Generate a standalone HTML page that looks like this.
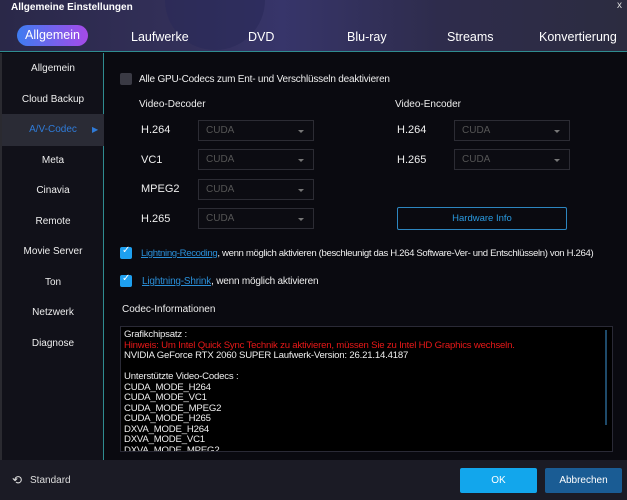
<!DOCTYPE html>
<html><head><meta charset="utf-8"><style>
*{margin:0;padding:0;box-sizing:border-box}
body{width:627px;height:500px;overflow:hidden;background:#0a0a10;font-family:"Liberation Sans",sans-serif;color:#e6e6ea;position:relative;font-size:11px}
.hdr{position:absolute;left:0;top:0;width:627px;height:52px;background:linear-gradient(90deg,#2a2848 0%,#33305a 30%,#37356a 45%,#2e2c4c 70%,#2c2c40 100%);border-bottom:1px solid #2f8c90}
.blob{position:absolute;left:165px;top:0;width:100px;height:50px;border-radius:0 0 50px 50px;background:#2a2a58;opacity:.6}
.title{position:absolute;left:11px;top:2px;font-size:10px;font-weight:bold;color:#fff}
.x{position:absolute;right:5px;top:0;font-size:10px;color:#ddd}
.tab{position:absolute;top:30px;font-size:12.5px;color:#fff}
.pill{position:absolute;left:17px;top:25px;width:71px;height:21px;border-radius:11px;background:linear-gradient(90deg,#3e7cf0,#a64ae8);font-size:12.5px;text-align:center;line-height:21px;color:#fff}
.side{position:absolute;left:2px;top:53px;width:102px;height:407px;background:#111119;border-right:1px solid #2f8c90}
.side div{position:absolute;left:0;width:102px;text-align:center;font-size:10px;color:#eee}
.sel{background:#2a2b35;height:32px;line-height:32px;color:#2f7bd8!important}
.cb{position:absolute;width:12px;height:12px;border-radius:2px}
.lbl{position:absolute;font-size:10px;color:#eee;white-space:nowrap}
.s{position:absolute;width:116px;height:21px;border:1px solid #2c2c34;background:#0c0c12;color:#555;font-size:10px;padding:4px 0 0 7px}
.s:after{content:"";position:absolute;right:9px;top:9px;border:3px solid transparent;border-top-color:#777}
.cd{position:absolute;font-size:11px;color:#eee}
a{color:#2a8fd8;text-decoration:underline}
.info{position:absolute;left:120px;top:326px;width:493px;height:126px;background:#000;border:1px solid #2a2a36;font-size:9.6px;line-height:10.5px;padding:3px 0 0 3px;overflow:hidden;color:#eee;letter-spacing:-0.2px}
.foot{position:absolute;left:0;top:460px;width:627px;height:40px;background:#1b1b25}
.btn{position:absolute;top:468px;height:25px;border-radius:2px;font-size:10px;text-align:center;line-height:25px;color:#fff}
</style></head><body>
<div class="hdr"><div class="blob"></div>
<div class="title">Allgemeine Einstellungen</div><div class="x">x</div>
<div class="pill">Allgemein</div>
<div class="tab" style="left:131px">Laufwerke</div>
<div class="tab" style="left:248px">DVD</div>
<div class="tab" style="left:347px">Blu-ray</div>
<div class="tab" style="left:447px">Streams</div>
<div class="tab" style="left:539px">Konvertierung</div>
</div>
<div class="side">
<div style="top:10px">Allgemein</div>
<div style="top:41px">Cloud Backup</div>
<div class="sel" style="top:61px">A/V-Codec <span style="position:absolute;left:90px;top:0;font-size:8px;color:#2f7bd8">▶</span></div>
<div style="top:102px">Meta</div>
<div style="top:132px">Cinavia</div>
<div style="top:163px">Remote</div>
<div style="top:193px">Movie Server</div>
<div style="top:224px">Ton</div>
<div style="top:254px">Netzwerk</div>
<div style="top:285px">Diagnose</div>
</div>
<div style="position:absolute;left:0;top:53px;width:2px;height:407px;background:#2a2a30"></div>

<div class="cb" style="left:120px;top:73px;background:#3a3a44"></div>
<div class="lbl" style="left:139px;top:74px;letter-spacing:-0.2px">Alle GPU-Codecs zum Ent- und Verschlüsseln deaktivieren</div>
<div class="lbl" style="left:139px;top:99px">Video-Decoder</div>
<div class="lbl" style="left:395px;top:99px">Video-Encoder</div>

<div class="cd" style="left:141px;top:124px">H.264</div><div class="s" style="left:198px;top:120px">CUDA</div>
<div class="cd" style="left:141px;top:154px">VC1</div><div class="s" style="left:198px;top:149px">CUDA</div>
<div class="cd" style="left:141px;top:183px">MPEG2</div><div class="s" style="left:198px;top:179px">CUDA</div>
<div class="cd" style="left:141px;top:213px">H.265</div><div class="s" style="left:198px;top:208px">CUDA</div>
<div class="cd" style="left:397px;top:124px">H.264</div><div class="s" style="left:454px;top:120px">CUDA</div>
<div class="cd" style="left:397px;top:154px">H.265</div><div class="s" style="left:454px;top:149px">CUDA</div>
<div style="position:absolute;left:397px;top:207px;width:170px;height:23px;border:1px solid #2d86c0;border-radius:2px;color:#2a9ae0;font-size:9.5px;text-align:center;line-height:21px">Hardware Info</div>

<div class="cb" style="left:120px;top:247px;background:#1ea0f0"><span style="position:absolute;left:2px;top:-2px;font-size:10px;color:#fff">✓</span></div>
<div class="lbl" style="left:141px;top:248px;font-size:9.6px;letter-spacing:-0.35px"><a>Lightning-Recoding</a>, wenn möglich aktivieren (beschleunigt das H.264 Software-Ver- und Entschlüsseln) von H.264)</div>
<div class="cb" style="left:120px;top:275px;background:#1ea0f0"><span style="position:absolute;left:2px;top:-2px;font-size:10px;color:#fff">✓</span></div>
<div class="lbl" style="left:142px;top:276px;letter-spacing:-0.2px"><a>Lightning-Shrink</a>, wenn möglich aktivieren</div>
<div class="lbl" style="left:122px;top:304px">Codec-Informationen</div>

<div class="info">Grafikchipsatz :<br><span style="color:#e81818">Hinweis: Um Intel Quick Sync Technik zu aktivieren, müssen Sie zu Intel HD Graphics wechseln.</span><br>NVIDIA GeForce RTX 2060 SUPER Laufwerk-Version: 26.21.14.4187<br><br>Unterstützte Video-Codecs :<br>CUDA_MODE_H264<br>CUDA_MODE_VC1<br>CUDA_MODE_MPEG2<br>CUDA_MODE_H265<br>DXVA_MODE_H264<br>DXVA_MODE_VC1<br>DXVA_MODE_MPEG2
<div style="position:absolute;right:5px;top:3px;width:2px;height:95px;background:#1e4a6a"></div></div>

<div class="foot"></div>
<div style="position:absolute;left:12px;top:473px;font-size:12px;color:#ddd">⟲</div>
<div class="lbl" style="left:30px;top:475px;color:#ddd">Standard</div>
<div class="btn" style="left:460px;width:77px;background:#12a6ec">OK</div>
<div class="btn" style="left:545px;width:77px;background:#1a5c94">Abbrechen</div>
</body></html>
